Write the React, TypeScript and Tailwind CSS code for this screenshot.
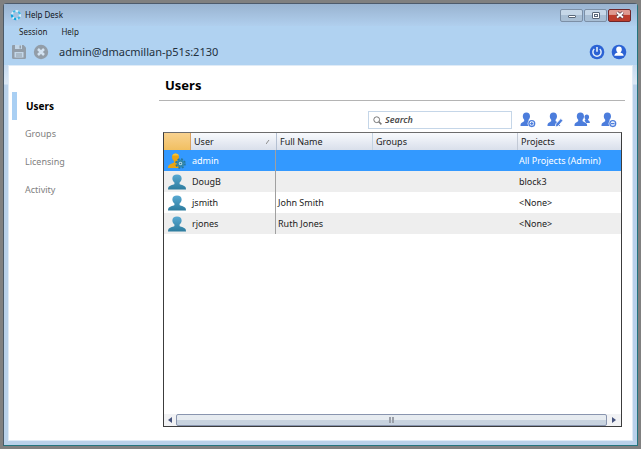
import { useState } from "react";
import type { ReactNode } from "react";

const navItems = ["Users", "Groups", "Licensing", "Activity"];

const users = [
  { name: "admin", fullName: "", groups: "", projects: "All Projects (Admin)", admin: true },
  { name: "DougB", fullName: "", groups: "", projects: "block3", admin: false },
  { name: "jsmith", fullName: "John Smith", groups: "", projects: "<None>", admin: false },
  { name: "rjones", fullName: "Ruth Jones", groups: "", projects: "<None>", admin: false },
];

const BUST =
  "M7 0.5c2.3 0 3.6 1.5 3.6 3.7 0 1.6-.7 3-1.6 3.8v1.3c0 .6 3.9 1.2 4.6 3 .3.7.4 1.5.4 2.2H0c0-.7.1-1.5.4-2.2.7-1.8 4.6-2.4 4.6-3V8c-.9-.8-1.6-2.2-1.6-3.8C3.4 2 4.7.5 7 .5z";

function AppLogo() {
  return (
    <svg className="h-3 w-3" viewBox="0 0 12 12" fill="none" aria-hidden="true">
      <circle cx="6" cy="6" r="4" stroke="#d8effa" strokeWidth="2.2" />
      <path d="M3.2 3.1A4 4 0 0 1 5.4 2M8.2 2.700A4 4 0 0 1 9.900 5.300M9.600 7.700A4 4 0 0 1 7.800 9.600" stroke="#3fb6e3" strokeWidth="2.200" />
      <path d="M2 5.500A4 4 0 0 0 2.700 8.300M4 9.500a4 4 0 0 0 2.300.5" stroke="#0fa3dd" strokeWidth="2.400" />
    </svg>
  );
}

function SaveIcon() {
  return (
    <svg className="h-4 w-4" viewBox="0 0 16 16" aria-hidden="true">
      <path d="M2 1h10.500L15 3.500v10a1.500 1.500 0 0 1-1.500 1.500h-11A1.500 1.500 0 0 1 1 13.500V2a1 1 0 0 1 1-1z" fill="#929da8" />
      <path d="M4 1h7v4H4zM3.500 8h9v5.500h-9z" fill="#c3d7e9" />
      <path d="M8.500 1.500H10v3H8.500zM5 9.500h6v1H5zM5 11.500h6v1H5z" fill="#929da8" />
    </svg>
  );
}

function CancelIcon() {
  return (
    <svg className="h-4 w-4" viewBox="0 0 16 16" aria-hidden="true">
      <circle cx="8" cy="8" r="7.200" fill="#929da8" />
      <path d="M5 5l6 6M11 5l-6 6" stroke="#d3e3f2" strokeWidth="2.500" />
    </svg>
  );
}

function PowerIcon() {
  return (
    <svg className="h-4 w-4" viewBox="0 0 16 16" aria-hidden="true">
      <circle cx="8" cy="8" r="7.300" fill="#2b62d4" />
      <path d="M5.300 5a4.100 4.100 0 1 0 5.400 0" fill="none" stroke="#e4effb" strokeWidth="1.500" />
      <path d="M8 3v4.800" stroke="#e4effb" strokeWidth="1.600" />
    </svg>
  );
}

function AccountIcon() {
  return (
    <svg className="h-4 w-4" viewBox="0 0 16 16" aria-hidden="true">
      <circle cx="8" cy="8" r="7.300" fill="#2b62d4" />
      <path
        d="M8 2.600c1.900 0 2.800 1.200 2.800 2.900 0 1.200-.5 2.100-1.200 2.700v.5c1.400.4 2.900.9 3.100 3.100H3.300c.2-2.200 1.700-2.700 3.100-3.100v-.5c-.7-.6-1.200-1.500-1.200-2.700 0-1.700.9-2.900 2.800-2.900z"
        fill="#fff"
      />
    </svg>
  );
}

function UserActionIcon({ children }: { children: ReactNode }) {
  return (
    <svg className="h-4 w-4" viewBox="0 0 16 16" aria-hidden="true">
      <path
        d="M6.400.5c2.300 0 3.600 1.500 3.600 3.700 0 1.500-.6 2.700-1.400 3.500v1.200c0 .8 3.600 1.200 4.300 3.200.2.600.2 1.300.2 1.900H.5c0-.6 0-1.300.2-1.900.7-2 3.500-2.400 3.500-3.200V7.700c-.8-.8-1.400-2-1.400-3.500C2.800 2 4.100.5 6.400.5z"
        fill="#4c7ddc"
      />
      {children}
    </svg>
  );
}

function RowIcon({ admin }: { admin: boolean }) {
  if (admin) {
    return (
      <svg className="h-4 w-[18px]" viewBox="0 0 18 16" aria-hidden="true">
        <path
          d="M7.500.5C9.700.5 11 1.800 11 3.800S10 7.500 9 8v1.500l3 5.500H0c0-2 .5-3 1.800-3.600L6 9.500V8C5 7.300 4 5.800 4 3.800S5.300.5 7.500.5z"
          fill="#e9a414"
        />
        <path d="M4.200 2.600C4.800 1.100 6.200.4 7.500.4s3 .7 3.500 2.200z" fill="#f8c63a" />
        <circle cx="12.500" cy="10.500" r="4.300" fill="none" stroke="#28779b" strokeWidth="2" strokeDasharray="1.900 1.480" />
        <circle cx="12.500" cy="10.500" r="2.800" fill="#b4d9e8" stroke="#3287ab" strokeWidth="2" />
        <circle cx="12.500" cy="10.500" r=".8" fill="#286f91" />
      </svg>
    );
  }
  return (
    <svg className="h-4 w-[18px]" viewBox="0 0 14 15" preserveAspectRatio="none" aria-hidden="true">
      <defs>
        <linearGradient id="bust" x1="0" y1="0" x2="0" y2="1">
          <stop offset="0" stopColor="#58a9d2" />
          <stop offset="1" stopColor="#2d7c9e" />
        </linearGradient>
      </defs>
      <path d={BUST} fill="url(#bust)" />
    </svg>
  );
}

const actions = [
  {
    label: "Add user",
    badge: (
      <>
        <circle cx="11.800" cy="11.600" r="4.200" fill="#fff" />
        <circle cx="11.800" cy="11.600" r="2.900" fill="#fff" stroke="#4c7ddc" strokeWidth="1.300" />
        <path d="M11.800 10v3.200M10.200 11.600h3.200" stroke="#4c7ddc" strokeWidth="1.200" />
      </>
    ),
  },
  {
    label: "Edit user",
    badge: (
      <path d="M8.300 15.300l.6-3.500 4.900-5.300 2.200 2-4.800 5.600z" fill="#4c7ddc" stroke="#fff" strokeWidth=".9" />
    ),
  },
  {
    label: "Add to group",
    badge: (
      <path
        d="M12.800 2.500c1.500 0 2.300 1 2.300 2.400 0 1.100-.4 1.900-1 2.400v.9c.9.4 1.700.9 1.800 2.800h-3.700L10.500 8.600l1-1.300c-.6-.5-1-1.300-1-2.400 0-1.400.8-2.400 2.300-2.400z"
        fill="#4c7ddc"
      />
    ),
  },
  {
    label: "Remove user",
    badge: (
      <>
        <circle cx="11.800" cy="11.600" r="4.200" fill="#fff" />
        <circle cx="11.800" cy="11.600" r="2.900" fill="#fff" stroke="#4c7ddc" strokeWidth="1.300" />
        <path d="M10 11.600h3.600" stroke="#4c7ddc" strokeWidth="1.400" />
      </>
    ),
  },
];

function TitleBar() {
  const frame =
    "flex h-[13px] w-[23px] items-center justify-center rounded-[2px] border border-[#7c8fa6] bg-linear-to-b from-[#c6d7e8] from-50% to-[#a9bfd5] to-50%";
  return (
    <header className="flex h-[22px] items-center justify-between bg-linear-to-b from-[#99b3d0] to-[#b0cfee] px-[6px]">
      <div className="flex items-center gap-[3px]">
        <AppLogo />
        <h1 className="text-[8px] leading-3 text-[#10151c]">Help Desk</h1>
      </div>
      <div className="flex gap-px">
        <button className={frame} aria-label="Minimize">
          <span className="mt-[3px] h-[3px] w-2 rounded-[1px] border border-[#596779] bg-white" />
        </button>
        <button className={frame} aria-label="Maximize">
          <span className="h-[7px] w-2 rounded-[1px] border border-[#596779] bg-white p-px">
            <span className="block h-[3px] border border-[#596779]" />
          </span>
        </button>
        <button
          className="flex h-[13px] w-[23px] items-center justify-center rounded-[2px] border border-[#70262a] bg-linear-to-b from-[#df9a90] from-40% to-[#bc3d2c] to-50%"
          aria-label="Close"
        >
          <svg className="h-2 w-[10px]" viewBox="0 0 10 8" aria-hidden="true">
            <path d="M2 1.500l6 5M8 1.500l-6 5" stroke="#5b3f48" strokeWidth="3.400" />
            <path d="M2 1.500l6 5M8 1.500l-6 5" stroke="#fff" strokeWidth="1.800" />
          </svg>
        </button>
      </div>
    </header>
  );
}

function HorizontalScrollbar() {
  return (
    <div className="flex h-3 bg-[#f1f2f4]">
      <button className="flex w-3 items-center justify-center" aria-label="Scroll left">
        <svg className="h-[6px] w-1" viewBox="0 0 4 6" aria-hidden="true">
          <path d="M4 0v6L0 3z" fill="#46537d" />
        </svg>
      </button>
      <div className="flex flex-1 items-center justify-center gap-px rounded-[2px] border border-[#8995af] bg-linear-to-b from-[#e6ebf0] from-50% to-[#c8d3df] to-50%">
        <span className="h-[6px] w-[2px] bg-[#9a9fa8]" />
        <span className="h-[6px] w-[2px] bg-[#9a9fa8]" />
      </div>
      <button className="flex w-[14px] items-center justify-center" aria-label="Scroll right">
        <svg className="h-[6px] w-1" viewBox="0 0 4 6" aria-hidden="true">
          <path d="M0 0v6l4-3z" fill="#46537d" />
        </svg>
      </button>
    </div>
  );
}

export default function App() {
  const [page, setPage] = useState("Users");
  const [selected, setSelected] = useState("admin");
  const [query, setQuery] = useState("");

  const visible = users.filter((u) => (u.name + u.fullName).toLowerCase().includes(query.toLowerCase()));

  return (
    <div className="flex min-h-screen bg-[#808080] p-[3px] font-['Noto_Sans','Open_Sans',sans-serif] text-[9px] leading-3 text-[#1c1c1c]">
      <div className="flex flex-1 flex-col rounded-t-[4px] border border-t-[#4e5b6b] border-r-[#24757f] border-b-[#24757f] border-l-[#4b5a68] bg-linear-to-b from-[#c4d9ef] from-[60px] via-[#dce8f5] via-[80px] to-[#b9d1ea] to-[81px] pb-[4px]">
        <TitleBar />

        <div className="bg-[#b0d2f1]">
          <nav className="flex h-[11px] items-center gap-[14px] pl-[15px] text-[8px] leading-[10px]" aria-label="Menu">
            <button>Session</button>
            <button>Help</button>
          </nav>
          <div className="flex h-7 items-center pt-[2px] pr-[10px] pl-[7px]">
            <button aria-label="Save">
              <SaveIcon />
            </button>
            <button className="ml-[6px]" aria-label="Cancel">
              <CancelIcon />
            </button>
            <span className="ml-[10px] flex-1 text-[11px] leading-4 text-[#23303d]">admin@dmacmillan-p51s:2130</span>
            <button aria-label="Disconnect">
              <PowerIcon />
            </button>
            <button className="ml-[6px]" aria-label="Account">
              <AccountIcon />
            </button>
          </div>
        </div>

        <div className="mx-1 flex flex-1 border border-[#dfebf7] bg-white">
          <nav className="w-[150px] pt-[26px] pl-[3px]" aria-label="Sections">
            {navItems.map((item) => (
              <a
                key={item}
                href={"#" + item.toLowerCase()}
                onClick={() => setPage(item)}
                className={
                  item === page
                    ? "flex h-7 items-center border-l-[5px] border-[#a9cff3] pl-[9px] text-[10px] font-bold text-black"
                    : "flex h-7 items-center border-l-[5px] border-transparent pl-2 text-[#808080]"
                }
              >
                {item}
              </a>
            ))}
          </nav>

          <main className="flex min-w-0 flex-1 flex-col pr-[7px]">
            <h2 className="flex h-[35px] items-center border-b border-[#b4b4b4] pt-[4px] pl-[6px] text-[13px] leading-5 font-bold text-black">
              {page}
            </h2>

            <div className="mt-[10px] flex items-center justify-end">
              <label className="flex h-[18px] w-[144px] items-center gap-[3px] border border-[#c5d6e8] bg-white pl-1">
                <svg className="h-[9px] w-[9px]" viewBox="0 0 9 9" fill="none" stroke="#777" aria-hidden="true">
                  <circle cx="3.700" cy="3.700" r="2.900" strokeWidth="1" />
                  <path d="M5.800 5.800L8.400 8.400" strokeWidth="1.500" />
                </svg>
                <input
                  className="min-w-0 flex-1 font-semibold italic outline-none placeholder:text-[#4c4c4c]"
                  placeholder="Search"
                  aria-label="Search"
                  value={query}
                  onChange={(e) => setQuery(e.target.value)}
                />
              </label>
              <div className="mr-2 ml-2 flex gap-[11px]">
                {actions.map((action) => (
                  <button key={action.label} aria-label={action.label}>
                    <UserActionIcon>{action.badge}</UserActionIcon>
                  </button>
                ))}
              </div>
            </div>

            <div className="mt-[3px] mr-[3px] mb-[13px] ml-1 flex flex-1 flex-col border border-[#3c3c3c] border-t-[#6c6c6c]">
              <table className="w-full table-fixed border-separate border-spacing-0 text-left">
                <colgroup>
                  <col className="w-[26px]" />
                  <col className="w-[86px]" />
                  <col className="w-24" />
                  <col className="w-[145px]" />
                  <col />
                </colgroup>
                <thead>
                  <tr className="h-[17px] bg-linear-to-b from-[#f8fafd] to-[#d9dfeb]">
                    <th className="bg-linear-to-b from-[#f8d28f] to-[#f1bf60] p-0" aria-label="Type" />
                    <th className="border-l border-[#dba262] p-0 pl-[3px] font-normal">
                      <div className="flex items-center justify-between pr-[6px]">
                        User
                        <svg className="h-1 w-1" viewBox="0 0 4 4" fill="none" aria-hidden="true">
                          <path d="M0 4L3 0" stroke="#8c8c8c" />
                        </svg>
                      </div>
                    </th>
                    <th className="border-l border-[#b4c0d2] p-0 pl-[3px] font-normal">Full Name</th>
                    <th className="border-l border-[#c3d3e2] p-0 pl-[3px] font-normal">Groups</th>
                    <th className="border-l border-[#c3cad6] p-0 pl-[3px] font-normal">Projects</th>
                  </tr>
                </thead>
                <tbody>
                  {visible.map((user) => (
                    <tr
                      key={user.name}
                      onClick={() => setSelected(user.name)}
                      className={
                        user.name === selected ? "h-[21px] bg-[#3399ff] text-white" : "h-[21px] odd:bg-white even:bg-[#eeeeee]"
                      }
                    >
                      <td className="p-0 pl-1">
                        <RowIcon admin={user.admin} />
                      </td>
                      <td className="border-r border-[#a0a0a0] p-0 pl-[2px]">{user.name}</td>
                      <td className="p-0 pl-[2px]">{user.fullName}</td>
                      <td className="p-0 pl-[2px]">{user.groups}</td>
                      <td className="p-0 pl-[2px]">{user.projects}</td>
                    </tr>
                  ))}
                </tbody>
              </table>
              <div className="flex-1" />
              <HorizontalScrollbar />
            </div>
          </main>
        </div>
      </div>
    </div>
  );
}
